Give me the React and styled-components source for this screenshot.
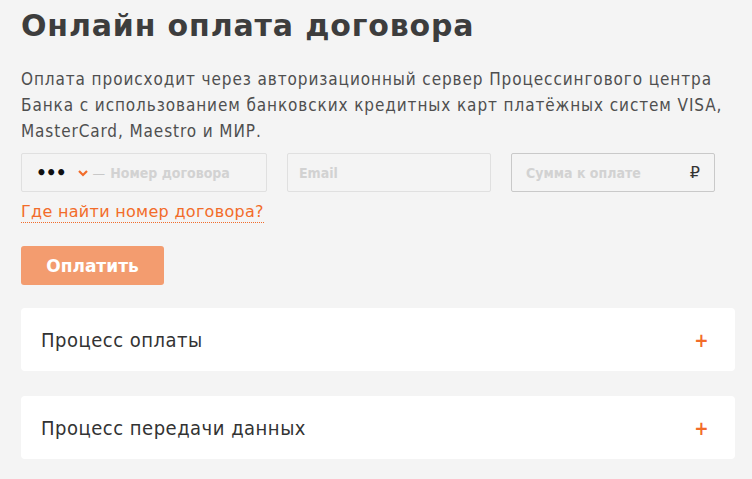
import React from "react";
import styled, { createGlobalStyle } from "styled-components";

const Global = createGlobalStyle`
  body {
    margin: 0;
    background: #f4f4f4;
    font-family: "DejaVu Sans", sans-serif;
  }
`;

const Page = styled.div`
  padding: 6px 17px 0 21px;
  width: 752px;
  box-sizing: border-box;
`;

const Title = styled.h1`
  margin: 0;
  font-family: "DejaVu Sans", sans-serif;
  font-size: 30px;
  font-weight: 700;
  color: #3d3d3d;
  line-height: 40px;
  letter-spacing: 0.85px;
`;

const Text = styled.p`
  margin: 20px 0 0;
  font-family: "DejaVu Sans Condensed", "Liberation Sans Narrow", sans-serif;
  font-size: 17px;
  line-height: 26px;
  letter-spacing: 0.9px;
  color: #4f4f4f;
  max-width: 714px;
`;

const Fields = styled.div`
  display: flex;
  gap: 20px;
  margin-top: 9px;
`;

const Field = styled.div`
  display: flex;
  align-items: center;
  width: ${(p) => p.w}px;
  height: 39px;
  box-sizing: border-box;
  border: 1px solid ${(p) => (p.active ? "#c9c9c9" : "#e0e0e0")};
  border-radius: 2px;
  padding: 0 ${(p) => p.pl || 11}px;
  font-family: "DejaVu Sans Condensed", "DejaVu Sans", sans-serif;
  font-size: 14px;
  font-weight: 700;
  color: #d2d2d2;
`;

const Dots = styled.span`
  color: #111;
  font-family: "DejaVu Sans", sans-serif;
  font-size: 17px;
  letter-spacing: -1px;
  margin-right: 11px;
`;

const Dash = styled.span`
  color: #c8c8c8;
  font-weight: 400;
  margin: 0 5px 0 4px;
`;

const Rub = styled.span`
  margin-left: auto;
  color: #333;
  font-family: "DejaVu Sans", sans-serif;
  font-weight: 400;
  font-size: 16px;
`;

const Link = styled.a`
  display: inline-block;
  margin-top: 10px;
  font-size: 16px;
  line-height: 20px;
  letter-spacing: 0.3px;
  color: #f26c2a;
  text-decoration: none;
  border-bottom: 1px dotted #f26c2a;
`;

const Button = styled.button`
  display: block;
  margin-top: 23px;
  width: 143px;
  height: 39px;
  border: 0;
  border-radius: 3px;
  background: #f39c6f;
  color: #fff;
  font-family: "DejaVu Sans", sans-serif;
  font-size: 17px;
  font-weight: 700;
`;

const Card = styled.div`
  display: flex;
  align-items: center;
  justify-content: space-between;
  height: 63px;
  margin-top: ${(p) => p.mt}px;
  background: #fff;
  border-radius: 4px;
  padding: 0 26px 0 20px;
  font-family: "DejaVu Sans Condensed", "Liberation Sans Narrow", sans-serif;
  font-size: 20px;
  letter-spacing: 0.5px;
  color: #333;
`;

const Plus = styled.span`
  color: #f26c2a;
  font-size: 19px;
  font-weight: 700;
`;

export default function App() {
  return (
    <>
      <Global />
      <Page>
        <Title>Онлайн оплата договора</Title>
        <Text>
          Оплата происходит через авторизационный сервер Процессингового центра
          Банка с использованием банковских кредитных карт платёжных систем VISA,
          MasterCard, Maestro и МИР.
        </Text>
        <Fields>
          <Field w={246} pl={14}>
            <Dots>•••</Dots>
            <svg width="12" height="8" viewBox="0 0 12 8">
              <path d="M2 2l4 4 4-4" stroke="#f26c2a" strokeWidth="2.2" fill="none" />
            </svg>
            <Dash>—</Dash>
            Номер договора
          </Field>
          <Field w={204}>Email</Field>
          <Field w={204} active pl={14}>
            Сумма к оплате
            <Rub>₽</Rub>
          </Field>
        </Fields>
        <Link>Где найти номер договора?</Link>
        <Button>Оплатить</Button>
        <Card mt={23}>
          Процесс оплаты
          <Plus>+</Plus>
        </Card>
        <Card mt={25}>
          Процесс передачи данных
          <Plus>+</Plus>
        </Card>
      </Page>
    </>
  );
}
